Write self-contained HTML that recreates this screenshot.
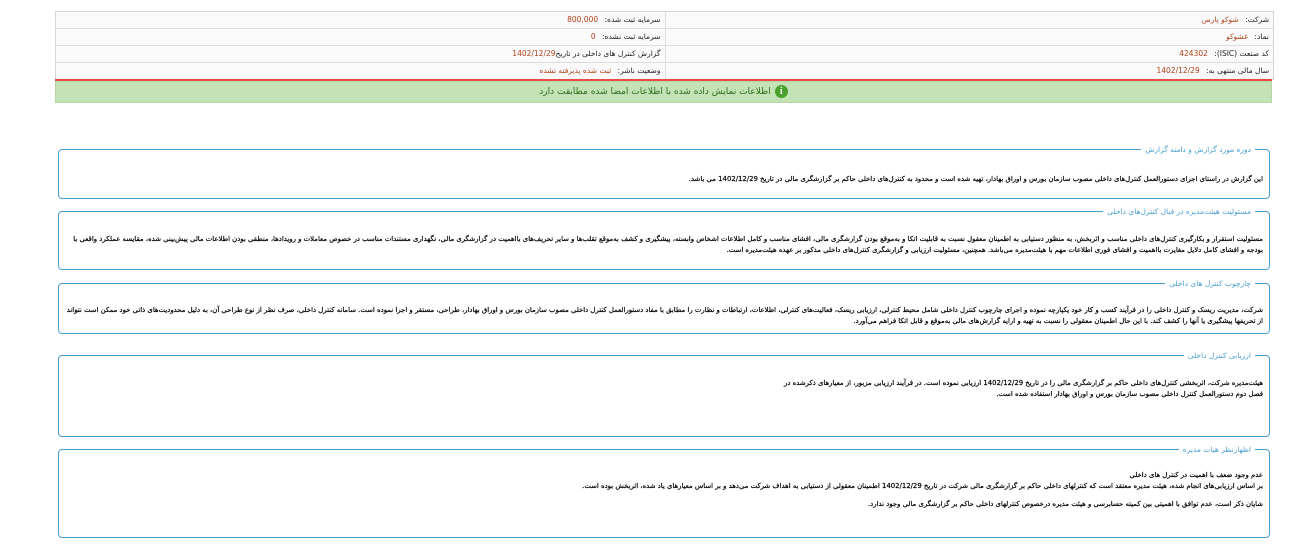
<!DOCTYPE html>
<html><head><meta charset="utf-8"><style>
body{margin:0;width:1292px;height:547px;background:#fff;font-family:"DejaVu Sans","Liberation Sans",sans-serif;position:relative;overflow:hidden;direction:rtl}
.t{position:absolute;left:55px;top:11px;width:1217px;border:1px solid #d6d6d6;background:#fafafa}
.row{height:16px;border-bottom:1px solid #dcdcdc;display:flex;font-size:7.5px;line-height:16px;color:#222}
.row:last-child{border-bottom:none}
.c{width:50%;padding-right:4px;box-sizing:border-box;white-space:nowrap}
.c:first-child{border-left:1px solid #dcdcdc}
.v{color:#b0401a;margin-right:4px}
.red{position:absolute;left:55px;top:79px;width:1217px;height:2px;background:#e84a4a}
.g{position:absolute;left:55px;top:81px;width:1217px;height:22px;background:#c3e2b5;border:1px solid #b6d6a6;box-sizing:border-box;font-size:9px;line-height:21px;text-align:center;color:#2e6d1e}
.ic{display:inline-block;width:13px;height:13px;border-radius:50%;background:#4aa02c;color:#fff;font-size:10px;font-weight:bold;line-height:13px;text-align:center;vertical-align:middle;margin-left:4px;font-family:"Liberation Serif",serif}
.f{position:absolute;left:58px;width:1212px;border:1px solid #4b9ed0;border-radius:4px;box-sizing:border-box}
.lg{position:absolute;right:14px;top:-6px;background:#fff;padding:0 4px;color:#4b9ed0;font-size:7.5px;line-height:11px}
.tx{position:absolute;right:6px;left:6px;font-size:6.9px;line-height:10.5px;color:#000;text-align:right;-webkit-text-stroke:0.2px #000}
</style></head><body>
<div class="t">
<div class="row"><div class="c">شرکت: <span class="v">شوکو پارس</span></div><div class="c">سرمایه ثبت شده: <span class="v">800,000</span></div></div>
<div class="row"><div class="c">نماد: <span class="v">غشوکو</span></div><div class="c">سرمایه ثبت نشده: <span class="v">0</span></div></div>
<div class="row"><div class="c">کد صنعت (ISIC): <span class="v">424302</span></div><div class="c">گزارش کنترل های داخلی در تاریخ<span class="v" style="margin:0">1402/12/29</span></div></div>
<div class="row"><div class="c">سال مالی منتهی به: <span class="v">1402/12/29</span></div><div class="c">وضعیت ناشر: <span class="v">ثبت شده پذیرفته نشده</span></div></div>
</div>
<div class="red"></div>
<div class="g"><span class="ic">i</span>اطلاعات نمایش داده شده با اطلاعات امضا شده مطابقت دارد</div>

<div class="f" style="top:149px;height:50px"><div class="lg">دوره مورد گزارش و دامنه گزارش</div>
<div class="tx" style="top:24px">این گزارش در راستای اجرای دستورالعمل کنترل‌های داخلی مصوب سازمان بورس و اوراق بهادار، تهیه شده است و محدود به کنترل‌های داخلی حاکم بر گزارشگری مالی در تاریخ 1402/12/29 می باشد.</div></div>

<div class="f" style="top:211px;height:59px"><div class="lg">مسئولیت هیئت‌مدیره در قبال کنترل‌های داخلی</div>
<div class="tx" style="top:22px">مسئولیت استقرار و بکارگیری کنترل‌های داخلی مناسب و اثربخش، به منظور دستیابی به اطمینان معقول نسبت به قابلیت اتکا و به‌موقع بودن گزارشگری مالی، افشای مناسب و کامل اطلاعات اشخاص وابسته، پیشگیری و کشف به‌موقع تقلب‌ها و سایر تحریف‌های بااهمیت در گزارشگری مالی، نگهداری مستندات مناسب در خصوص معاملات و رویدادها، منطقی بودن اطلاعات مالی پیش‌بینی شده، مقایسه عملکرد واقعی با بودجه و افشای کامل دلایل مغایرت بااهمیت و افشای فوری اطلاعات مهم با هیئت‌مدیره می‌باشد. همچنین، مسئولیت ارزیابی و گزارشگری کنترل‌های داخلی مذکور بر عهده هیئت‌مدیره است.</div></div>

<div class="f" style="top:283px;height:51px"><div class="lg">چارچوب کنترل های داخلی</div>
<div class="tx" style="top:21px">شرکت، مدیریت ریسک و کنترل داخلی را در فرآیند کسب و کار خود یکپارچه نموده و اجرای چارچوب کنترل داخلی شامل محیط کنترلی، ارزیابی ریسک، فعالیت‌های کنترلی، اطلاعات، ارتباطات و نظارت را مطابق با مفاد دستورالعمل کنترل داخلی مصوب سازمان بورس و اوراق بهادار، طراحی، مستقر و اجرا نموده است. سامانه کنترل داخلی، صرف نظر از نوع طراحی آن، به دلیل محدودیت‌های ذاتی خود ممکن است نتواند از تحریفها پیشگیری یا آنها را کشف کند. با این حال اطمینان معقولی را نسبت به تهیه و ارایه گزارش‌های مالی به‌موقع و قابل اتکا فراهم می‌آورد.</div></div>

<div class="f" style="top:355px;height:82px"><div class="lg">ارزیابی کنترل داخلی</div>
<div class="tx" style="top:22px;left:auto;width:548px">هیئت‌مدیره شرکت، اثربخشی کنترل‌های داخلی حاکم بر گزارشگری مالی را در تاریخ 1402/12/29 ارزیابی نموده است. در فرآیند ارزیابی مزبور، از معیارهای ذکرشده در<br>فصل دوم دستورالعمل کنترل داخلی مصوب سازمان بورس و اوراق بهادار استفاده شده است.</div></div>

<div class="f" style="top:449px;height:89px"><div class="lg">اظهارنظر هیات مدیره</div>
<div class="tx" style="top:20px">عدم وجود ضعف با اهمیت در کنترل های داخلی<br>بر اساس ارزیابی‌های انجام شده، هیئت مدیره معتقد است که کنترلهای داخلی حاکم بر گزارشگری مالی شرکت در تاریخ 1402/12/29 اطمینان معقولی از دستیابی به اهداف شرکت می‌دهد و بر اساس معیارهای یاد شده، اثربخش بوده است.</div>
<div class="tx" style="top:49px">شایان ذکر است، عدم توافق با اهمیتی بین کمیته حسابرسی و هیئت مدیره درخصوص کنترلهای داخلی حاکم بر گزارشگری مالی وجود ندارد.</div></div>
</body></html>
